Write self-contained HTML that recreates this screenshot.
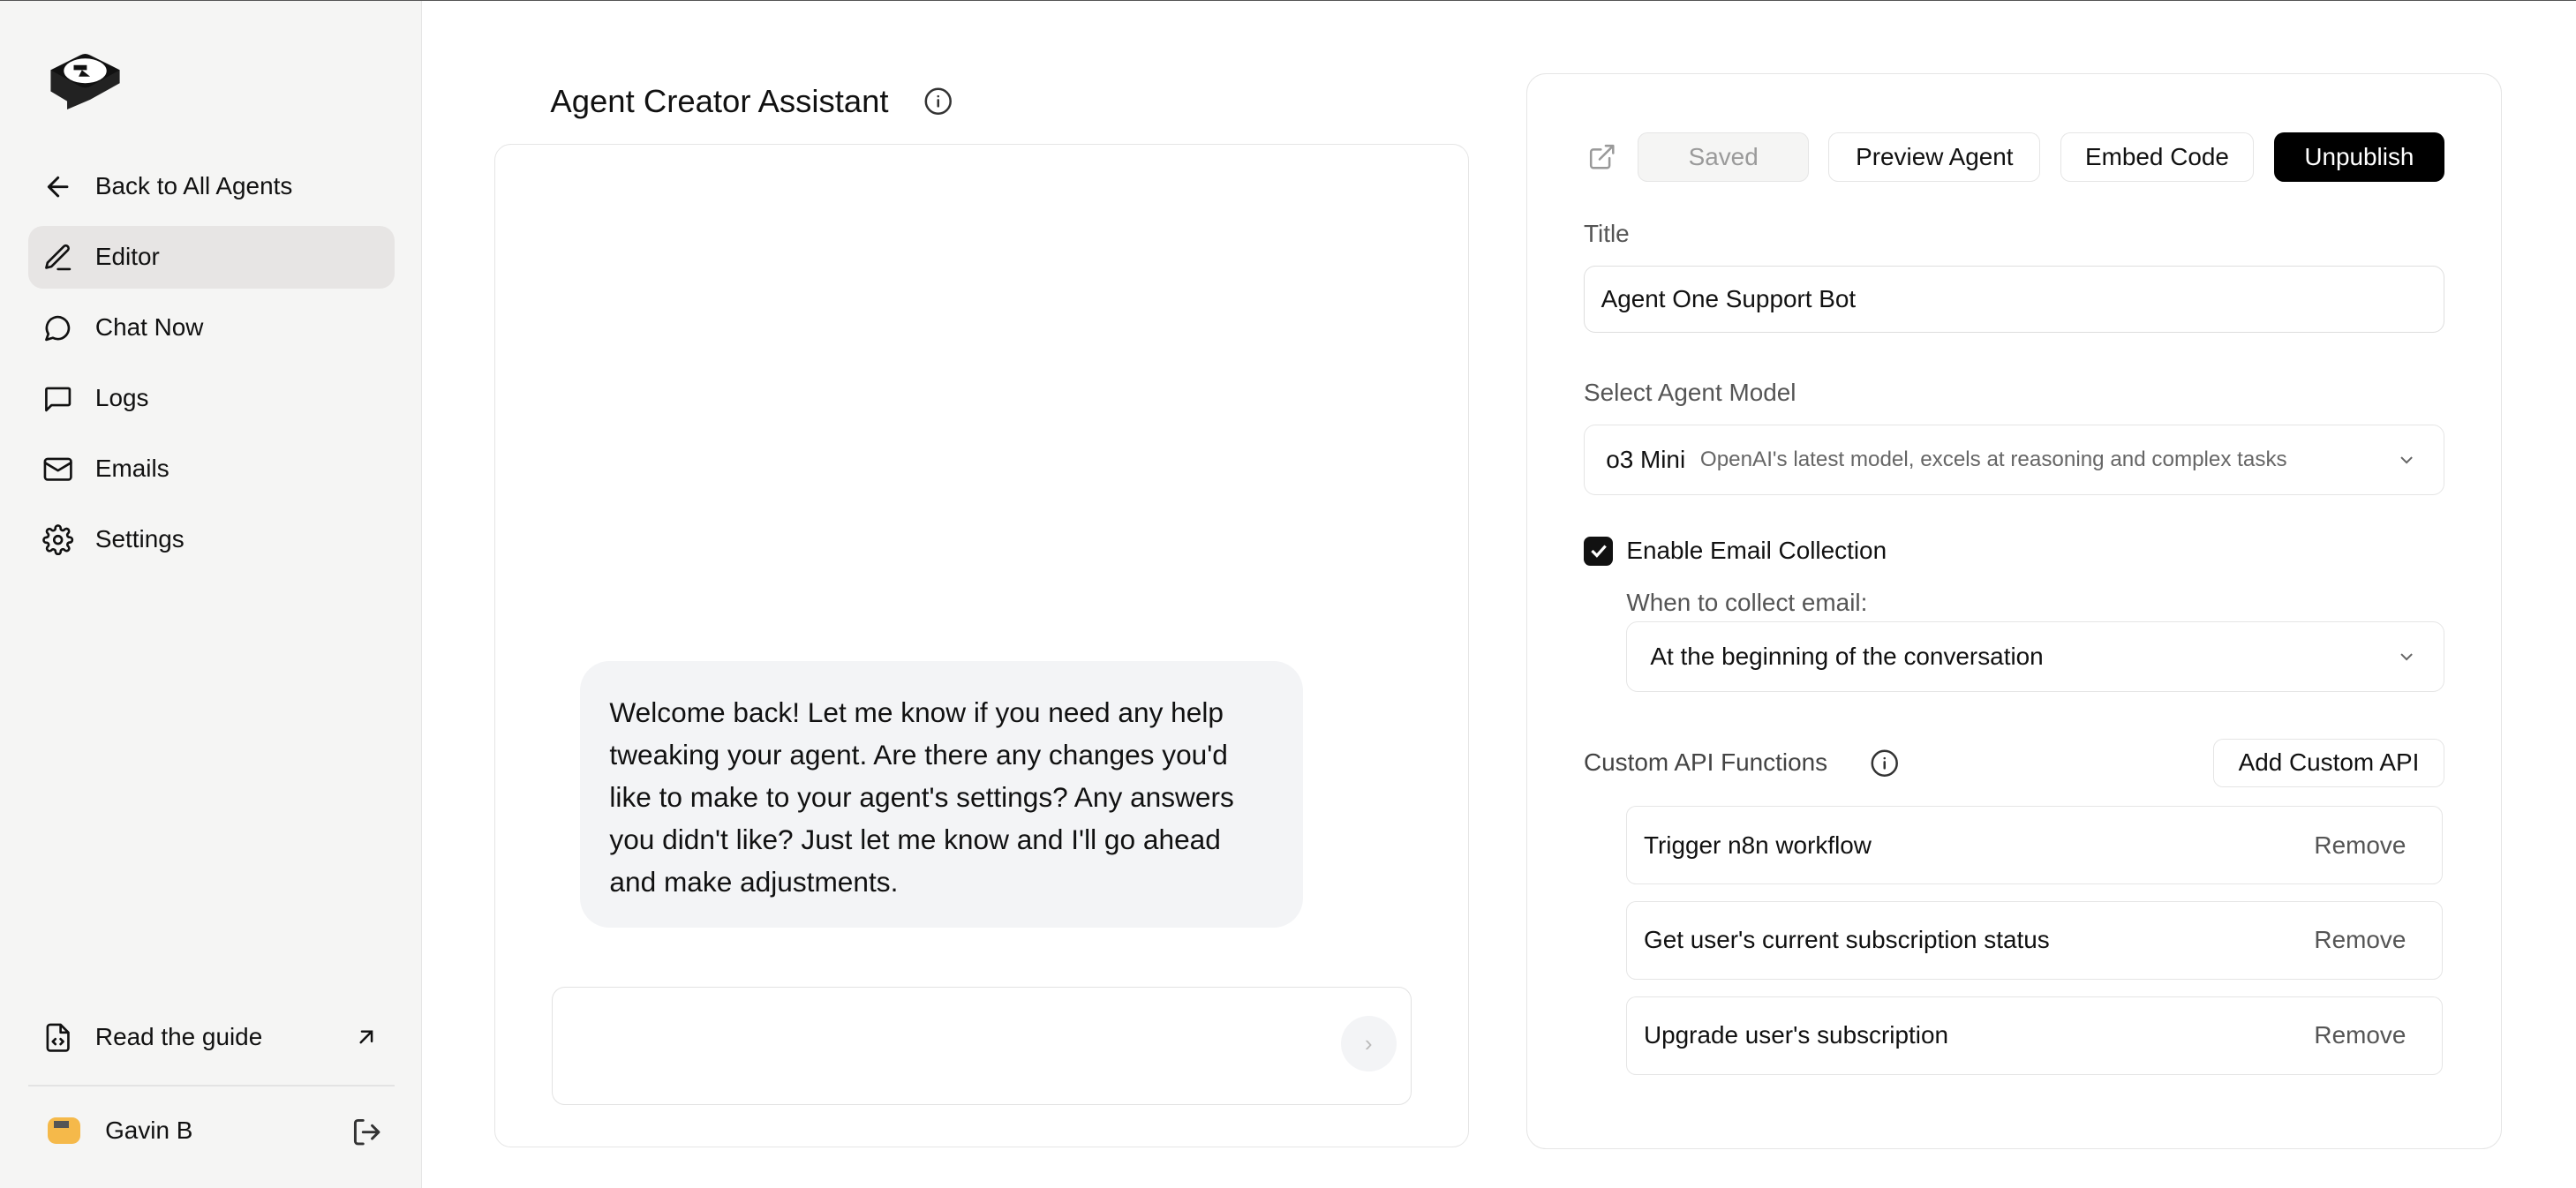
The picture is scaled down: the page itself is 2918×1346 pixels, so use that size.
<!DOCTYPE html>
<html><head><meta charset="utf-8"><style>
*{box-sizing:border-box;margin:0;padding:0}
html,body{width:2918px;height:1346px;overflow:hidden;background:#fff}
#r{zoom:1.861;position:relative;width:1568px;height:723px;font-family:"Liberation Sans",sans-serif;color:#111;border-top:1px solid #555}
.a{position:absolute}
.sb{left:0;top:0;width:257px;height:723px;background:#f5f5f4;border-right:1px solid #e5e5e5}
.nav{position:absolute;left:17px;width:223px;height:38px;border-radius:9px;display:flex;align-items:center;font-size:15px;font-weight:500}
.nav svg{position:absolute;left:9px;width:19px;height:19px}
.nav span{position:absolute;left:41px}
.btn{position:absolute;top:80px;height:30px;border:1px solid #e5e5e5;border-radius:6px;font-size:15px;display:flex;align-items:center;justify-content:center;background:#fff}
.lbl{position:absolute;font-size:15px;color:#555}
.box{position:absolute;border:1px solid #dedede;border-radius:7px;background:#fff;display:flex;align-items:center;font-size:15px}
.row{position:absolute;left:990px;width:497px;height:48px;border:1px solid #e5e5e5;border-radius:6px;font-size:15px;font-weight:500;display:flex;align-items:center;padding-left:10px}
.row b{position:absolute;right:22px;font-weight:400;color:#555}
</style></head><body><div id="r">
<div class="a sb">
 <svg class="a" style="left:27px;top:30px" width="50" height="42" viewBox="0 0 50 42"><path d="M4 12 L22 3 Q25 1.5 28 3 L46 12 L46 20 L28 30 L14 36 L14 31 L4 25 Z" fill="#222"/><path d="M4 12 L22 3 Q25 1.5 28 3 L46 12 L28 22 Q25 23.5 22 22 Z" fill="#111"/><ellipse cx="25" cy="12.5" rx="13" ry="7.5" fill="#fff"/><path d="M18 9h8v3h-8z M23 12l5 4h-7z" fill="#111"/></svg>
 <div class="nav" style="top:94px"><svg viewBox="0 0 24 24" fill="none" stroke="#111" stroke-width="2" stroke-linecap="round" stroke-linejoin="round"><path d="M19 12H5M12 19l-7-7 7-7"/></svg><span>Back to All Agents</span></div>
 <div class="nav" style="top:137px;background:#e7e5e4"><svg viewBox="0 0 24 24" fill="none" stroke="#111" stroke-width="1.8" stroke-linecap="round" stroke-linejoin="round"><path d="M12 21h9M16.5 3.5a2.1 2.1 0 013 3L7 19l-4 1 1-4z"/></svg><span>Editor</span></div>
 <div class="nav" style="top:180px"><svg viewBox="0 0 24 24" fill="none" stroke="#111" stroke-width="1.8" stroke-linecap="round" stroke-linejoin="round"><path d="M3 21l1.6-4.5A8.5 8.5 0 1112 20.5a8.6 8.6 0 01-4-1z"/></svg><span>Chat Now</span></div>
 <div class="nav" style="top:223px"><svg viewBox="0 0 24 24" fill="none" stroke="#111" stroke-width="1.8" stroke-linecap="round" stroke-linejoin="round"><path d="M3 21V5a1 1 0 011-1h16a1 1 0 011 1v11a1 1 0 01-1 1H7z"/></svg><span>Logs</span></div>
 <div class="nav" style="top:266px"><svg viewBox="0 0 24 24" fill="none" stroke="#111" stroke-width="1.8" stroke-linecap="round" stroke-linejoin="round"><rect x="2" y="4" width="20" height="16" rx="2"/><path d="M2 7l10 6 10-6"/></svg><span>Emails</span></div>
 <div class="nav" style="top:309px"><svg viewBox="0 0 24 24" fill="none" stroke="#111" stroke-width="1.8" stroke-linecap="round" stroke-linejoin="round"><circle cx="12" cy="12" r="3"/><path d="M19.4 15a1.7 1.7 0 00.3 1.8l.1.1a2 2 0 11-2.8 2.8l-.1-.1a1.7 1.7 0 00-1.8-.3 1.7 1.7 0 00-1 1.5V21a2 2 0 11-4 0v-.1a1.7 1.7 0 00-1.1-1.5 1.7 1.7 0 00-1.8.3l-.1.1a2 2 0 11-2.8-2.8l.1-.1a1.7 1.7 0 00.3-1.8 1.7 1.7 0 00-1.5-1H3a2 2 0 110-4h.1a1.7 1.7 0 001.5-1.1 1.7 1.7 0 00-.3-1.8l-.1-.1a2 2 0 112.8-2.8l.1.1a1.7 1.7 0 001.8.3H9a1.7 1.7 0 001-1.5V3a2 2 0 114 0v.1a1.7 1.7 0 001 1.5 1.7 1.7 0 001.8-.3l.1-.1a2 2 0 112.8 2.8l-.1.1a1.7 1.7 0 00-.3 1.8V9a1.7 1.7 0 001.5 1H21a2 2 0 110 4h-.1a1.7 1.7 0 00-1.5 1z"/></svg><span>Settings</span></div>
 <div class="nav" style="top:612px"><svg viewBox="0 0 24 24" fill="none" stroke="#111" stroke-width="1.8" stroke-linecap="round" stroke-linejoin="round"><path d="M14 2H6a2 2 0 00-2 2v16a2 2 0 002 2h12a2 2 0 002-2V8z M14 2v6h6 M10 13l-2 2 2 2 M14 13l2 2-2 2"/></svg><span>Read the guide</span><svg style="left:198px;width:16px;height:16px" viewBox="0 0 24 24" fill="none" stroke="#111" stroke-width="2" stroke-linecap="round"><path d="M7 17L17 7M8 7h9v9"/></svg></div>
 <div class="a" style="left:17px;top:660px;width:223px;height:1px;background:#e3e3e3"></div>
 <div class="a" style="left:29px;top:680px;width:20px;height:16px;background:#f5b94a;border-radius:5px"></div>
 <div class="a" style="left:33px;top:682px;width:9px;height:4px;background:#555"></div>
 <div class="a" style="left:64px;top:679px;font-size:15px;font-weight:500">Gavin B</div>
 <svg class="a" style="left:214px;top:679px" width="19" height="19" viewBox="0 0 24 24" fill="none" stroke="#333" stroke-width="2" stroke-linecap="round" stroke-linejoin="round"><path d="M9 21H5a2 2 0 01-2-2V5a2 2 0 012-2h4 M16 17l5-5-5-5 M21 12H9"/></svg>
</div>

<div class="a" style="left:335px;top:50px;font-size:19.6px;font-weight:500">Agent Creator Assistant</div>
<svg class="a" style="left:562px;top:52px" width="18" height="18" viewBox="0 0 24 24" fill="none" stroke="#333" stroke-width="1.8"><circle cx="12" cy="12" r="10"/><path d="M12 16v-5M12 8h.01" stroke-linecap="round"/></svg>
<div class="a" style="left:301px;top:87px;width:593px;height:611px;border:1px solid #e5e5e5;border-radius:10px"></div>
<div class="a" style="left:353px;top:402px;width:440px;height:162px;background:#f3f4f6;border-radius:18px;padding:18px 18px;font-size:17px;line-height:25.8px">Welcome back! Let me know if you need any help tweaking your agent. Are there any changes you'd like to make to your agent's settings? Any answers you didn't like? Just let me know and I'll go ahead and make adjustments.</div>
<div class="a" style="left:336px;top:600px;width:523px;height:72px;border:1px solid #e2e2e2;border-radius:8px"></div>
<div class="a" style="left:816px;top:618px;width:34px;height:34px;border-radius:50%;background:#f3f4f6;color:#bbb;font-size:14px;text-align:center;line-height:34px">›</div>

<div class="a" style="left:929px;top:44px;width:594px;height:655px;border:1px solid #e5e5e5;border-radius:12px"></div>
<svg class="a" style="left:966px;top:86px" width="18" height="18" viewBox="0 0 24 24" fill="none" stroke="#999" stroke-width="1.8" stroke-linecap="round" stroke-linejoin="round"><path d="M18 13v6a2 2 0 01-2 2H5a2 2 0 01-2-2V8a2 2 0 012-2h6 M15 3h6v6 M10 14L21 3"/></svg>
<div class="btn" style="left:997px;width:104px;background:#f5f5f4;color:#9a9a9a">Saved</div>
<div class="btn" style="left:1113px;width:129px">Preview Agent</div>
<div class="btn" style="left:1254px;width:118px">Embed Code</div>
<div class="btn" style="left:1384px;width:104px;background:#000;border-color:#000;color:#fff;font-weight:500">Unpublish</div>
<div class="lbl" style="left:964px;top:133px">Title</div>
<div class="box" style="left:964px;top:161px;width:524px;height:41px;padding-left:10px">Agent One Support Bot</div>
<div class="lbl" style="left:964px;top:230px">Select Agent Model</div>
<div class="box" style="left:964px;top:258px;width:524px;height:43px;padding-left:13px;border-color:#e5e5e5">o3 Mini<span style="font-size:13px;color:#666;margin-left:9px">OpenAI's latest model, excels at reasoning and complex tasks</span><svg style="position:absolute;right:16px" width="13" height="13" viewBox="0 0 24 24" fill="none" stroke="#666" stroke-width="2"><path d="M6 9l6 6 6-6"/></svg></div>
<div class="a" style="left:964px;top:326px;width:18px;height:18px;background:#111;border-radius:4px"></div>
<svg class="a" style="left:966px;top:328px" width="14" height="14" viewBox="0 0 24 24" fill="none" stroke="#fff" stroke-width="3"><path d="M5 12l5 5 9-10"/></svg>
<div class="a" style="left:990px;top:326px;font-size:15px;font-weight:500">Enable Email Collection</div>
<div class="lbl" style="left:990px;top:358px">When to collect email:</div>
<div class="box" style="left:990px;top:378px;width:498px;height:43px;padding-left:14px;border-color:#e5e5e5">At the beginning of the conversation<svg style="position:absolute;right:16px" width="13" height="13" viewBox="0 0 24 24" fill="none" stroke="#666" stroke-width="2"><path d="M6 9l6 6 6-6"/></svg></div>
<div class="lbl" style="left:964px;top:455px;color:#444">Custom API Functions</div>
<svg class="a" style="left:1138px;top:455px" width="18" height="18" viewBox="0 0 24 24" fill="none" stroke="#333" stroke-width="1.8"><circle cx="12" cy="12" r="10"/><path d="M12 16v-5M12 8h.01" stroke-linecap="round"/></svg>
<div class="btn" style="left:1347px;top:449px;width:141px">Add Custom API</div>
<div class="row" style="top:490px">Trigger n8n workflow<b>Remove</b></div>
<div class="row" style="top:548px">Get user's current subscription status<b>Remove</b></div>
<div class="row" style="top:606px">Upgrade user's subscription<b>Remove</b></div>
</div></body></html>
